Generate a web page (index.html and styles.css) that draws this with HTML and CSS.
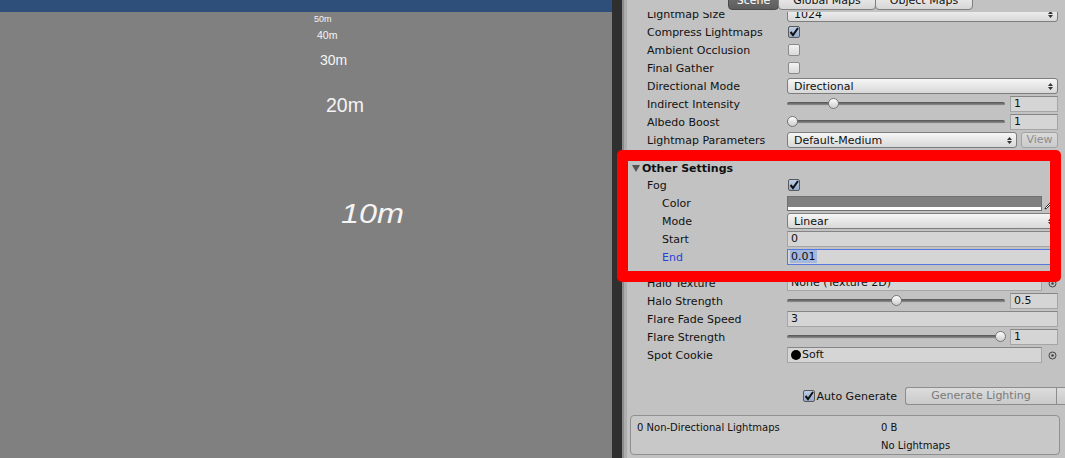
FILE: index.html
```html
<!DOCTYPE html>
<html lang="en">
<head>
    <meta charset="UTF-8">
    <meta name="viewport" content="width=device-width, initial-scale=1.0">
    <title>Lighting</title>
    <link rel="stylesheet" href="styles.css">
</head>
<body>
<div class="window">
    <div class="scene">
        <div class="scene-bar"></div>
        <span class="dist d50">50m</span>
        <span class="dist d40">40m</span>
        <span class="dist d30">30m</span>
        <span class="dist d20">20m</span>
        <span class="dist d10">10m</span>
    </div>

    <div class="splitter"></div>

    <div class="inspector">
        <div class="tabs">
            <div class="tab active">Scene</div>
            <div class="tab">Global Maps</div>
            <div class="tab">Object Maps</div>
        </div>

        <div class="scroll">
            <div class="content">
                <div class="row">
                    <div class="label">Lightmap Size</div>
                    <div class="popup"><span>1024</span><svg class="arrows" width="5" height="9" viewBox="0 0 5 9"><path d="M0 4 L2.5 1 L5 4 Z M0 5 L5 5 L2.5 8 Z"/></svg></div>
                </div>
                <div class="row">
                    <div class="label">Compress Lightmaps</div>
                    <div class="check on"><svg width="12" height="12" viewBox="0 0 12 12"><path d="M2.5 6 L5 9 L10 2"/></svg></div>
                </div>
                <div class="row">
                    <div class="label">Ambient Occlusion</div>
                    <div class="check"></div>
                </div>
                <div class="row">
                    <div class="label">Final Gather</div>
                    <div class="check"></div>
                </div>
                <div class="row">
                    <div class="label">Directional Mode</div>
                    <div class="popup"><span>Directional</span><svg class="arrows" width="5" height="9" viewBox="0 0 5 9"><path d="M0 4 L2.5 1 L5 4 Z M0 5 L5 5 L2.5 8 Z"/></svg></div>
                </div>
                <div class="row">
                    <div class="label">Indirect Intensity</div>
                    <div class="slider">
                        <div class="track"><div class="rail"></div><div class="stops"><div class="thumb" style="left: 20%"></div></div></div>
                        <div class="num">1</div>
                    </div>
                </div>
                <div class="row">
                    <div class="label">Albedo Boost</div>
                    <div class="slider">
                        <div class="track"><div class="rail"></div><div class="stops"><div class="thumb" style="left: 0%"></div></div></div>
                        <div class="num">1</div>
                    </div>
                </div>
                <div class="row">
                    <div class="label">Lightmap Parameters</div>
                    <div class="popup"><span>Default-Medium</span><svg class="arrows" width="5" height="9" viewBox="0 0 5 9"><path d="M0 4 L2.5 1 L5 4 Z M0 5 L5 5 L2.5 8 Z"/></svg></div>
                    <div class="mini-btn">View</div>
                </div>

                <div class="foldout">
                    <svg width="8" height="7" viewBox="0 0 8 7"><path d="M0 0 L8 0 L4 7 Z"/></svg>
                    <span>Other Settings</span>
                </div>
                <div class="row">
                    <div class="label">Fog</div>
                    <div class="check on"><svg width="12" height="12" viewBox="0 0 12 12"><path d="M2.5 6 L5 9 L10 2"/></svg></div>
                </div>
                <div class="row sub">
                    <div class="label">Color</div>
                    <div class="color-field"><div class="swatch"></div><div class="alpha"></div></div>
                    <svg class="dropper" width="9" height="9" viewBox="0 0 9 9"><path d="M1 8 L1.5 6.5 L5.5 2.5 L6.5 3.5 L2.5 7.5 Z" fill="#fff" stroke="#111" stroke-width="0.9"/><path d="M6 1.5 L7.5 3" stroke="#111" stroke-width="1.6"/></svg>
                </div>
                <div class="row sub">
                    <div class="label">Mode</div>
                    <div class="popup"><span>Linear</span><svg class="arrows" width="5" height="9" viewBox="0 0 5 9"><path d="M0 4 L2.5 1 L5 4 Z M0 5 L5 5 L2.5 8 Z"/></svg></div>
                </div>
                <div class="row sub">
                    <div class="label">Start</div>
                    <div class="field">0</div>
                </div>
                <div class="row sub">
                    <div class="label focus-label">End</div>
                    <div class="field focused"><span class="selected">0.01</span></div>
                </div>

                <div class="row gap">
                    <div class="label">Halo Texture</div>
                    <div class="field object">None (Texture 2D)</div>
                    <svg class="picker" width="9" height="9" viewBox="0 0 9 9"><circle cx="4.5" cy="4.5" r="3.5" fill="none" stroke="#444"/><circle cx="4.5" cy="4.5" r="1.3" fill="#444"/></svg>
                </div>
                <div class="row">
                    <div class="label">Halo Strength</div>
                    <div class="slider">
                        <div class="track"><div class="rail"></div><div class="stops"><div class="thumb" style="left: 50%"></div></div></div>
                        <div class="num">0.5</div>
                    </div>
                </div>
                <div class="row">
                    <div class="label">Flare Fade Speed</div>
                    <div class="field">3</div>
                </div>
                <div class="row">
                    <div class="label">Flare Strength</div>
                    <div class="slider">
                        <div class="track"><div class="rail"></div><div class="stops"><div class="thumb" style="left: 100%"></div></div></div>
                        <div class="num">1</div>
                    </div>
                </div>
                <div class="row">
                    <div class="label">Spot Cookie</div>
                    <div class="field object"><span class="dot"></span>Soft</div>
                    <svg class="picker" width="9" height="9" viewBox="0 0 9 9"><circle cx="4.5" cy="4.5" r="3.5" fill="none" stroke="#444"/><circle cx="4.5" cy="4.5" r="1.3" fill="#444"/></svg>
                </div>

                <div class="actions">
                    <div class="toggle">
                        <div class="check on"><svg width="12" height="12" viewBox="0 0 12 12"><path d="M2.5 6 L5 9 L10 2"/></svg></div>
                        <span>Auto Generate</span>
                    </div>
                    <div class="gen-btn">
                        <span class="gen-main">Generate Lighting</span>
                        <span class="gen-drop"></span>
                    </div>
                </div>

                <div class="stats">
                    <div class="stat-row"><span class="stat-name">0 Non-Directional Lightmaps</span><span>0 B</span></div>
                    <div class="stat-row"><span class="stat-name"></span><span>No Lightmaps</span></div>
                </div>
            </div>
        </div>
    </div>
</div>

<div class="highlight"></div>
</body>
</html>
```

FILE: styles.css
```css
* {
    box-sizing: border-box;
}

body {
    margin: 0;
    width: 1065px;
    height: 458px;
    overflow: hidden;
    position: relative;
    font-family: "DejaVu Sans", Verdana, sans-serif;
    font-size: 11px;
    color: #111;
}

.window {
    display: flex;
    height: 458px;
}

/* scene view */

.scene {
    width: 612px;
    flex: none;
    position: relative;
    background: #808080;
}

.scene-bar {
    height: 12px;
    background: #2f4f7b;
}

.dist {
    position: absolute;
    font-family: "Liberation Sans", Arial, sans-serif;
    color: #f4f4f4;
    line-height: 1;
    white-space: nowrap;
    transform-origin: 0 50%;
}

.d50 { left: 314px; top: 15px; font-size: 9px; }
.d40 { left: 317px; top: 30px; font-size: 10.5px; }
.d30 { left: 320px; top: 53px; font-size: 14px; }
.d20 { left: 326px; top: 96px; font-size: 19.5px; }
.d10 { left: 341px; top: 201px; font-size: 27px; font-style: italic; transform: scaleX(1.2); }

.splitter {
    width: 12px;
    flex: none;
    background: #2f2f2f;
    border-right: 2px solid #8c8c8c;
}

/* inspector */

.inspector {
    flex: 1;
    background: #c2c2c2;
    border-left: 3px solid #adadad;
    overflow: hidden;
}

.tabs {
    height: 12px;
    overflow: hidden;
    display: flex;
    align-items: flex-end;
    padding-left: 101px;
}

.tab {
    height: 18px;
    margin-bottom: 2px;
    margin-right: -1px;
    border: 1px solid #7e7e7e;
    border-radius: 0 0 4px 4px;
    background: linear-gradient(#f2f2f2, #d6d6d6);
    line-height: 16px;
    text-align: center;
    width: 98px;
}

.tab.active {
    width: 51px;
    background: linear-gradient(#767676, #5c5c5c);
    border-color: #4a4a4a;
    color: #fff;
}

.scroll {
    height: 446px;
    overflow: hidden;
}

.content {
    margin-top: -7px;
    padding: 0 7px 0 20px;
}

.row {
    height: 18px;
    display: flex;
    align-items: center;
}

.row.gap {
    margin-top: 8px;
}

.label {
    width: 140px;
    flex: none;
    white-space: nowrap;
}

.row.sub .label {
    padding-left: 15px;
}

.focus-label {
    color: #2741d6;
}

.popup {
    flex: 1;
    height: 16px;
    border: 1px solid #7d7d7d;
    border-radius: 3px;
    background: linear-gradient(#f6f6f6, #d8d8d8);
    display: flex;
    align-items: center;
    justify-content: space-between;
    padding: 0 4px 0 6px;
}

.arrows {
    fill: #333;
}

.mini-btn {
    width: 37px;
    height: 16px;
    margin-left: 4px;
    border: 1px solid #a3a3a3;
    border-radius: 3px;
    background: linear-gradient(#dadada, #cbcbcb);
    color: #8c8c8c;
    text-align: center;
    line-height: 14px;
}

.check {
    width: 12px;
    height: 12px;
    flex: none;
    margin-left: 1px;
    border: 1px solid #8a8a8a;
    border-radius: 2px;
    background: linear-gradient(#f2f2f2, #d9d9d9);
    position: relative;
}

.check.on {
    border-color: #5a5a5a;
    background: linear-gradient(#bccde6, #95aacb);
}

.check svg {
    position: absolute;
    left: -1px;
    top: -1px;
    fill: none;
    stroke: #111;
    stroke-width: 2;
}

.slider {
    flex: 1;
    display: flex;
    align-items: center;
}

.track {
    flex: 1;
    height: 16px;
    position: relative;
}

.rail {
    position: absolute;
    left: 0;
    right: 0;
    top: 6px;
    height: 4px;
    border-radius: 2px;
    background: linear-gradient(#545454, #7e7e7e 60%, #d8d8d8);
}

.stops {
    position: absolute;
    left: 5px;
    right: 5px;
    top: 0;
    bottom: 0;
}

.thumb {
    position: absolute;
    top: 2px;
    width: 11px;
    height: 11px;
    margin-left: -5.5px;
    border: 1px solid #777;
    border-radius: 50%;
    background: linear-gradient(#fdfdfd, #cdcdcd);
}

.num,
.field {
    height: 16px;
    border: 1px solid #a5a5a5;
    border-top-color: #858585;
    background: #d5d5d5;
    line-height: 14px;
    padding: 0 3px;
    white-space: nowrap;
    overflow: hidden;
}

.num {
    width: 48px;
    flex: none;
    margin-left: 5px;
}

.field {
    flex: 1;
}

.field.object {
    flex: none;
    width: 255px;
    display: flex;
    align-items: center;
}

.field.focused {
    border-color: #5577e0;
    padding-left: 2px;
}

.selected {
    background: #a2b8df;
    padding: 0 1px;
}

.dot {
    width: 10px;
    height: 10px;
    border-radius: 50%;
    background: #000;
    margin-right: 1px;
}

.picker {
    margin-left: 6px;
}

.color-field {
    width: 255px;
    height: 15px;
    border: 1px solid #6f6f6f;
    background: #fff;
    display: flex;
    flex-direction: column;
}

.swatch {
    flex: 1;
    background: #808080;
}

.alpha {
    height: 3px;
    background: #fff;
}

.dropper {
    margin-left: 2px;
    margin-top: 4px;
}

.foldout {
    height: 16px;
    margin: 11px 0 0 -15px;
    display: flex;
    align-items: center;
    font-weight: bold;
}

.foldout svg {
    fill: #555;
    margin-right: 2px;
}

/* bottom actions */

.actions {
    height: 18px;
    margin: 23px -7px 0 0;
    display: flex;
    justify-content: flex-end;
    align-items: center;
}

.toggle {
    display: flex;
    align-items: center;
    margin-right: 8px;
}

.toggle span {
    margin-left: 2px;
}

.gen-btn {
    width: 160px;
    height: 18px;
    display: flex;
    border: 1px solid #8d8d8d;
    border-right: none;
    border-radius: 3px 0 0 3px;
    background: linear-gradient(#dcdcdc, #cacaca);
    color: #7a7a7a;
}

.gen-main {
    width: 151px;
    border-right: 1px solid #8d8d8d;
    text-align: center;
    line-height: 16px;
}

.stats {
    height: 40px;
    margin: 10px -2px 0 -17px;
    padding: 2px 6px 0;
    border: 1px solid #8f8f8f;
    border-radius: 4px;
    background: #c8c8c8;
    font-size: 10px;
}

.stat-row {
    height: 18px;
    display: flex;
    align-items: center;
}

.stat-name {
    width: 244px;
}

/* annotation */

.highlight {
    position: absolute;
    left: 617px;
    top: 150px;
    width: 444px;
    height: 132px;
    border: 11px solid #ff0000;
    border-radius: 5px;
}
```
